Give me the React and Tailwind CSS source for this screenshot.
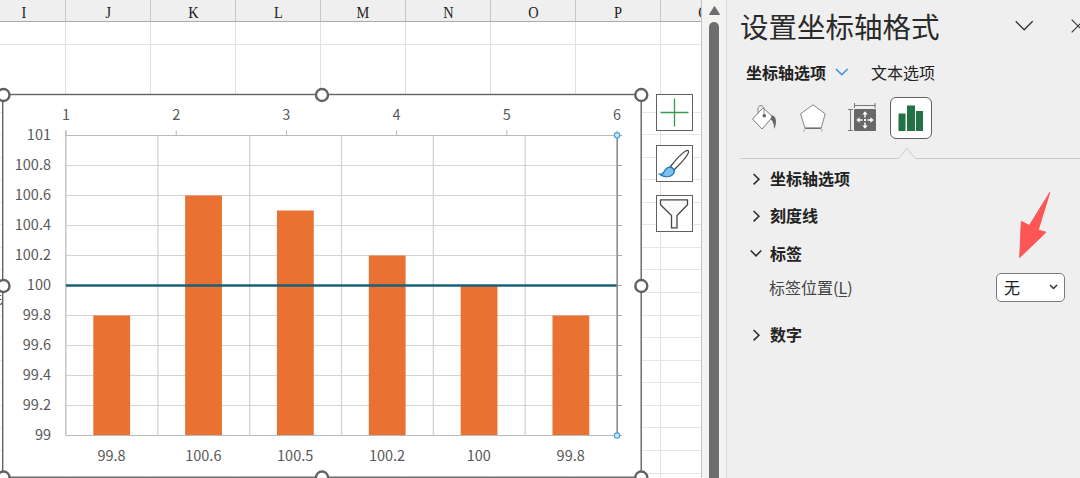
import React from 'react'
import { clsx } from 'clsx'

const COLUMNS = ['I', 'J', 'K', 'L', 'M', 'N', 'O', 'P', 'Q']

const ROW_HEIGHTS = ['h-[23px]', 'h-[67.5px]', ...Array(17).fill('h-[22.57px]')]

const BARS = [
  { value: 99.8 },
  { value: 100.6 },
  { value: 100.5 },
  { value: 100.2 },
  { value: 100 },
  { value: 99.8 },
]

const Y_TICKS = ['101', '100.8', '100.6', '100.4', '100.2', '100', '99.8', '99.6', '99.4', '99.2', '99']

const PLOT = { left: 66, right: 617, top: 135.5, bottom: 435.5 }

const getColumnWidth = (index) => {
  if (index === 0) return 'w-[66px]'
  return 'w-[85px]'
}

const getY = (value) => PLOT.bottom - (value - 99) * 150

const Handle = ({ x, y }) => (
  <circle cx={x} cy={y} r="6" fill="white" stroke="#616161" strokeWidth="2.4" />
)

const Chart = () => {
  const step = (PLOT.right - PLOT.left) / 6
  const topStep = (PLOT.right - PLOT.left) / 5

  return (
    <svg
      className="absolute left-0 top-0 font-['Noto_Sans_CJK_SC',sans-serif] text-[14.5px]"
      width="701"
      height="478"
      viewBox="0 0 701 478"
    >
      {/* edge of the cell content hidden behind the chart */}
      <path d="M0 295.5h1.2M0 299.5h1.5M0 304.5c1.5 0 2-.8 2-2" fill="none" stroke="#555" strokeWidth="1.2" />
      <rect x="2.7" y="94.5" width="638.5" height="382.7" fill="white" stroke="#636363" strokeWidth="1.4" />

      {/* gridlines */}
      {Y_TICKS.map((tick, i) => (
        <g key={tick}>
          <line x1={PLOT.left} x2={PLOT.right} y1={PLOT.top + i * 30} y2={PLOT.top + i * 30} stroke={i === 0 || i === 10 ? '#b9b9b9' : '#d4d4d4'} />
          <line x1={PLOT.right} x2={PLOT.right + 5} y1={PLOT.top + i * 30} y2={PLOT.top + i * 30} stroke="#ababab" />
          <text x="51" y={PLOT.top + i * 30 + 4.6} textAnchor="end" fill="#595959">{tick}</text>
        </g>
      ))}
      {[1, 2, 3, 4, 5].map((i) => (
        <line key={i} x1={PLOT.left + i * step} x2={PLOT.left + i * step} y1={PLOT.top} y2={PLOT.bottom} stroke="#d4d4d4" strokeWidth="1.3" />
      ))}
      <line x1="65.8" x2="65.8" y1="130.5" y2={PLOT.bottom} stroke="#bcbcbc" strokeWidth="1.3" />

      {/* top axis */}
      {[1, 2, 3, 4, 5, 6].map((n, i) => (
        <g key={n}>
          <line x1={PLOT.left + i * topStep} x2={PLOT.left + i * topStep} y1="130.5" y2={PLOT.top} stroke="#b5b5b5" />
          <text x={PLOT.left + i * topStep} y="119.5" textAnchor="middle" fill="#595959">{n}</text>
        </g>
      ))}

      {BARS.map((bar, i) => (
        <g key={i}>
          <rect x={PLOT.left + i * step + 27.3} y={getY(bar.value)} width="36.8" height={PLOT.bottom - getY(bar.value) - 0.5} fill="#e97132" />
          <text x={PLOT.left + (i + 0.5) * step - 0.4} y="461" textAnchor="middle" fill="#595959">{bar.value}</text>
        </g>
      ))}
      <line x1={PLOT.left} x2={PLOT.right} y1="285.5" y2="285.5" stroke="#196178" strokeWidth="2.6" />

      {/* selected right axis */}
      <line x1="617.2" x2="617.2" y1={PLOT.top} y2={PLOT.bottom} stroke="#8c8c8c" strokeWidth="1.6" />
      <circle cx="617" cy="135.3" r="2.7" fill="#c9e8fb" stroke="#499cdb" strokeWidth="1.1" />
      <circle cx="617" cy="435.6" r="2.7" fill="#c9e8fb" stroke="#499cdb" strokeWidth="1.1" />

      {[95, 286, 477.5].map((y) => (
        <g key={y}>
          <Handle x={3.5} y={y} />
          {y !== 286 && <Handle x={322} y={y} />}
          <Handle x={641.3} y={y} />
        </g>
      ))}
    </svg>
  )
}

const ChartButton = ({ children }) => (
  <button className="flex h-[37px] w-[37px] items-center justify-center border border-[#616161] bg-white">
    {children}
  </button>
)

const ChartButtons = () => (
  <div className="absolute left-[656px] top-[94px] flex flex-col gap-[13.5px]">
    <ChartButton>
      <svg className="shrink-0" width="35" height="35" viewBox="0 0 35 35">
        <path d="M3.5 17.5h28M17.5 3.5v28" stroke="#369b52" strokeWidth="1.3" fill="none" />
      </svg>
    </ChartButton>
    <ChartButton>
      <svg className="shrink-0" width="35" height="35" viewBox="0 0 35 35">
        <path d="M13.5 20.5C19 13.5 25 7 29 4.8c2-1 3 0 2.4 1.8C29.5 12 22 19 17 24z" fill="white" stroke="#484848" strokeWidth="1.3" />
        <path d="M2.8 28.2c3.2.2 4-1.5 5.2-4 1.5-3 5-4 7.6-2 2.7 2.2 1.8 5.8-1 7.3-3.7 1.9-8.6 1.3-11.8-1.3z" fill="#80bfec" stroke="#1975bd" strokeWidth="1.3" />
      </svg>
    </ChartButton>
    <ChartButton>
      <svg className="shrink-0" width="35" height="35" viewBox="0 0 35 35">
        <path d="M3.5 3.8h27v5L20 19.5v12.3h-5.5V19.5L3.5 8.8z" fill="#fafafa" stroke="#454545" strokeWidth="1.3" />
      </svg>
    </ChartButton>
  </div>
)

const Sheet = () => (
  <div className="relative w-[702px] shrink-0 overflow-hidden border-r border-[#c4c4c4] bg-white">
    <div className="flex h-[22px] border-b border-[#ababab] bg-[#efefef]">
      {COLUMNS.map((column, i) => (
        <div
          key={column}
          className={clsx(
            "flex shrink-0 items-center justify-center border-r border-[#c6c6c6] font-['Liberation_Serif',serif] text-[17.5px] leading-none text-[#222]",
            getColumnWidth(i)
          )}
        >
          <span className={clsx('translate-y-[2px] scale-x-[.82]', i === 0 && '-translate-x-[9px]')}>{column}</span>
        </div>
      ))}
    </div>
    {ROW_HEIGHTS.map((height, i) => (
      <div key={i} className={clsx('flex border-b border-[#e6e6e6]', height)}>
        {COLUMNS.map((column, j) => (
          <div key={column} className={clsx('shrink-0 border-r border-[#e0e0e0]', getColumnWidth(j))} />
        ))}
      </div>
    ))}
    <Chart />
    <ChartButtons />
  </div>
)

const ScrollBar = () => (
  <div className="flex w-[25px] shrink-0 flex-col items-center border-r border-[#dcdcdc] bg-[#f3f3f2]">
    <svg className="mt-[5px] shrink-0" width="13" height="11" viewBox="0 0 13 11">
      <path d="M6.5 1.5 11.5 9.5h-10z" fill="#6e6e6e" stroke="#6e6e6e" strokeLinejoin="round" />
    </svg>
    <div className="mt-[6px] w-[10px] flex-1 rounded-t-full bg-[#6e6e6e]" />
  </div>
)

const Chevron = ({ open }) => (
  <svg className="shrink-0" width="12" height="12" viewBox="0 0 12 12" fill="none" stroke="#2e2e2e" strokeWidth="1.6">
    {open ? <path d="M.7 3.5 6 8.8l5.3-5.3" /> : <path d="M3.6 1 8.9 6.2l-5.3 5.2" />}
  </svg>
)

const Section = ({ title, open, children }) => (
  <div>
    <div className="flex h-[37.3px] items-center gap-[8px]">
      <Chevron open={open} />
      <span className="pb-[1px] text-[16px] font-bold leading-none text-[#222]">{title}</span>
    </div>
    {children}
  </div>
)

const IconTabs = () => (
  <div className="mt-[14px] flex h-[44px] items-center">
    <svg className="ml-[11px] shrink-0" width="26" height="28" viewBox="0 0 26 28">
      <path d="M1.5 15 12 3.9 21.7 12.8 11 25z" fill="white" stroke="#7a7a7a" />
      <path d="M7 9.5V4.6c0-4 6-4 6 0V11" fill="none" stroke="#8a8a8a" />
      <circle cx="13.3" cy="11.8" r="1.8" fill="#666" />
      <path d="M21 11.2c4 1 5.4 6 2.4 13.8-.6-4.4-1-7.5-4-10z" fill="#666" />
    </svg>
    <svg className="ml-[22px] shrink-0" width="28" height="28" viewBox="0 0 28 28">
      <path d="M14 .8 26.2 9.8 22.2 24H6L1.5 9.8z" fill="white" stroke="#858585" />
      <path d="M6 24.3h16" stroke="#686868" strokeWidth="1.2" />
      <path d="M5 27.5c0-1.5.3-2.5 1-3.2M23 27.5c0-1.5-.3-2.5-1-3.2" stroke="#a5a5a5" fill="none" />
    </svg>
    <svg className="ml-[20px] shrink-0" width="29" height="30" viewBox="0 0 29 30">
      <path d="M7.5 2.5h21M7.5 0v5M28 0v5M3.5 6.5v21M1 6.5h5M1 27.5h5" stroke="#777" fill="none" />
      <rect x="7" y="6" width="22" height="22" rx="1" fill="#686868" />
      <path d="M18 8.3l2.7 3.2h-2v3h-1.4v-3h-2zM18 25.7l2.7-3.2h-2v-3h-1.4v3h-2zM9.3 17l3.2-2.7v2h3v1.4h-3v2zM26.7 17l-3.2-2.7v2h-3v1.4h3v2z" fill="white" />
      <rect x="17" y="16" width="2" height="2" fill="white" />
    </svg>
    <div className="ml-[14px] flex h-[42px] w-[42px] items-center justify-center rounded-md border border-[#616161] bg-white">
      <svg width="26" height="28" viewBox="0 0 26 28">
        <path d="M.5 9.5h7V27h-7zM9 1.5h8V27H9zM18 7h7v20h-7z" fill="#217346" />
      </svg>
    </div>
  </div>
)

const FormatPanel = () => (
  <div className="flex-1 overflow-hidden bg-[#efefef] pl-[13px] font-['Noto_Sans_CJK_SC',sans-serif]">
    <div className="flex h-[52px] w-[367px] items-center">
      <h1 className="w-[275px] shrink-0 text-[28.5px] font-normal leading-none text-[#2a2a2a]">设置坐标轴格式</h1>
      <svg width="20" height="12" viewBox="0 0 20 12" fill="none" stroke="#333" strokeWidth="1.3">
        <path d="M.7 1.2 9.2 9.8l8.5-8.6" />
      </svg>
      <svg className="ml-[36px]" width="14" height="14" viewBox="0 0 14 14" fill="none" stroke="#333" strokeWidth="1.2">
        <path d="M.7.7 13.3 13.3M13.3.7.7 13.3" />
      </svg>
    </div>

    <div className="flex h-[40px] items-center pl-[6px] text-[16px] leading-none text-[#222]">
      <span className="pb-[1px] font-bold">坐标轴选项</span>
      <svg className="ml-[9px]" width="14" height="8" viewBox="0 0 14 8" fill="none" stroke="#3b8fd9" strokeWidth="1.5">
        <path d="M1 1l5.8 5.8L12.6 1" />
      </svg>
      <span className="ml-[22px] pb-[1px]">文本选项</span>
    </div>

    <div className="-mt-[10px]">
      <IconTabs />
    </div>

    <svg className="mt-[7px] block" width="340" height="14" viewBox="0 0 340 14" fill="none" stroke="#cbcbcb">
      <path d="M0 11.5h158.5l8.3-10.2 8.3 10.2H340" />
    </svg>

    <div className="-mt-[1px] pl-[10px]">
      <Section title="坐标轴选项" />
      <Section title="刻度线" />
      <Section title="标签" open>
        <div className="flex h-[44px] items-start justify-between pl-[19px] pr-[15px]">
          <span className="pt-[7px] text-[16px] leading-none text-[#444]">
            标签位置(<span className="underline underline-offset-2">L</span>)
          </span>
          <div className="mt-[1px] flex h-[29px] w-[69px] items-center justify-between rounded-[5px] border border-[#7b7b7b] bg-white pl-[7px] pr-[6px]">
            <span className="text-[16px] leading-none text-[#222]">无</span>
            <svg width="9" height="6" viewBox="0 0 9 6" fill="none" stroke="#333" strokeWidth="1.5">
              <path d="M1 1l3.5 3.5L8 1" />
            </svg>
          </div>
        </div>
      </Section>
      <Section title="数字" />
    </div>
  </div>
)

const App = () => {
  return (
    <div className="relative flex h-[478px] w-[1080px] overflow-hidden bg-[#efefef]">
      <Sheet />
      <ScrollBar />
      <FormatPanel />
      {/* arrow pointing at the label position select */}
      <svg className="absolute left-[1015px] top-[190px]" width="40" height="70" viewBox="0 0 40 70">
        <path d="M34.8 2.5 23.2 40 31 42.2 4.7 67.5 6.3 31.3 14.3 35.5z" fill="#fc5656" stroke="#fc5656" strokeLinejoin="round" />
      </svg>
    </div>
  )
}

export default App
